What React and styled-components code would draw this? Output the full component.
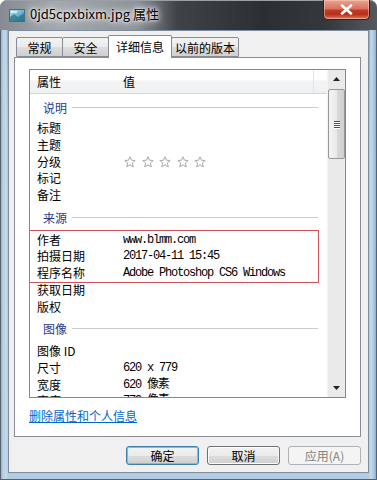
import React from 'react'
import styled, { createGlobalStyle } from 'styled-components'

const GlobalStyle = createGlobalStyle`
  html, body { margin: 0; padding: 0; background: #fff; }
  body {
    font-family: "Noto Sans CJK SC", "Noto Sans", sans-serif;
    font-size: 12px;
    color: #000;
  }
`

const groups = [
  {
    title: '说明',
    first: true,
    rows: [
      { label: '标题' },
      { label: '主题' },
      { label: '分级', stars: true },
      { label: '标记' },
      { label: '备注' },
    ],
  },
  {
    title: '来源',
    marked: [
      { label: '作者', value: 'www.blmm.com' },
      { label: '拍摄日期', value: '2017-04-11 15:45' },
      { label: '程序名称', value: 'Adobe Photoshop CS6 Windows' },
    ],
    rows: [{ label: '获取日期' }, { label: '版权' }],
  },
  {
    title: '图像',
    rows: [
      { label: '图像 ID' },
      { label: '尺寸', value: '620 x 779' },
      { label: '宽度', value: '620 像素' },
      { label: '高度', value: '779 像素' },
    ],
  },
]

function PictureIcon() {
  return (
    <svg width="16" height="13" viewBox="0 0 16 13">
      <defs>
        <linearGradient id="pic" x1="0" y1="0" x2="1" y2="1">
          <stop offset="0" stopColor="#bfe3f0" />
          <stop offset="0.5" stopColor="#6fb6cf" />
          <stop offset="1" stopColor="#2f7f9c" />
        </linearGradient>
      </defs>
      <rect x="0.5" y="0.5" width="15" height="12" fill="url(#pic)" stroke="#3b6f8a" />
      <path d="M1 8 L5 5 L9 8 L15 4 L15 12 L1 12 Z" fill="#2c6e86" opacity="0.7" />
      <path d="M2 3 L8 3" stroke="#eaf6fb" strokeWidth="1.5" />
    </svg>
  )
}

function Star() {
  return (
    <svg width="12" height="12" viewBox="0 0 12 12">
      <path
        d="M6 0.8 L7.5 4.2 L11.2 4.5 L8.4 7 L9.3 10.9 L6 8.9 L2.7 10.9 L3.6 7 L0.8 4.5 L4.5 4.2 Z"
        fill="#fbfbfb"
        stroke="#a9a9a9"
        strokeWidth="1"
        strokeLinejoin="round"
      />
    </svg>
  )
}

function PropRow({ label, value, stars }) {
  return (
    <Row>
      <Label>{label}</Label>
      {stars ? (
        <Stars>
          {[0, 1, 2, 3, 4].map((i) => (
            <Star key={i} />
          ))}
        </Stars>
      ) : (
        <Value>{value}</Value>
      )}
    </Row>
  )
}

export default function App() {
  return (
    <>
      <GlobalStyle />
      <Window>
        <TitleBar>
          <TitleIcon>
            <PictureIcon />
          </TitleIcon>
          <Title>0jd5cpxbixm.jpg 属性</Title>
          <CloseButton>
            <svg width="13" height="11" viewBox="0 0 13 11">
              <path d="M2 1.5 L11 9.5 M11 1.5 L2 9.5" stroke="#fff" strokeWidth="2.6" strokeLinecap="round" />
            </svg>
          </CloseButton>
        </TitleBar>

        <Client>
          <TabRow>
            <Tab $w={47}>常规</Tab>
            <Tab $w={47}>安全</Tab>
            <Tab $w={64} $active>详细信息</Tab>
            <Tab $w={68}>以前的版本</Tab>
          </TabRow>

          <Panel>
            <ListBox>
              <ListMain>
                <Header>
                  <HeadCell $w={86}>属性</HeadCell>
                  <HeadCell $w={191} $sep>值</HeadCell>
                </Header>
                <Body>
                  {groups.map((g) => (
                    <React.Fragment key={g.title}>
                      <GroupHead $first={g.first}>
                        <GroupTitle>{g.title}</GroupTitle>
                        <GroupLine />
                      </GroupHead>
                      {g.marked && (
                        <Marked>
                          {g.marked.map((r) => (
                            <PropRow key={r.label} {...r} />
                          ))}
                        </Marked>
                      )}
                      {g.rows.map((r) => (
                        <PropRow key={r.label} {...r} />
                      ))}
                    </React.Fragment>
                  ))}
                </Body>
              </ListMain>
              <ScrollBar>
                <ScrollArrow>
                  <svg width="7" height="4" viewBox="0 0 7 4"><path d="M0 4 L3.5 0 L7 4 Z" fill="#222" /></svg>
                </ScrollArrow>
                <Thumb>
                  <Grip />
                  <Grip />
                  <Grip />
                  <Grip />
                </Thumb>
                <Track />
                <ScrollArrow>
                  <svg width="7" height="4" viewBox="0 0 7 4"><path d="M0 0 L7 0 L3.5 4 Z" fill="#222" /></svg>
                </ScrollArrow>
              </ScrollBar>
            </ListBox>
            <RemoveLink href="#">删除属性和个人信息</RemoveLink>
          </Panel>

          <Buttons>
            <Button $focused>确定</Button>
            <Button>取消</Button>
            <Button disabled>应用(A)</Button>
          </Buttons>
        </Client>
      </Window>
    </>
  )
}

//#region Styling
const Window = styled.div`
  width: 377px;
  height: 480px;
  display: flex;
  flex-direction: column;
  border-radius: 7px 7px 0 0;
  overflow: hidden;
  box-sizing: border-box;
  background: linear-gradient(90deg, #8fa3b8 0, #b8cfe6 3px, #c6d9ec 6px, transparent 9px),
    linear-gradient(270deg, #8fa3b8 0, #a7c5e4 3px, #c6d9ec 6px, transparent 9px),
    linear-gradient(180deg, #5d6368 0, #7f878e 40px, #a9bccf 140px, #b3cbe3 100%);
  box-shadow: inset 0 0 0 1px #56636f;
`
const TitleBar = styled.div`
  height: 30px;
  flex: none;
  display: flex;
  align-items: flex-start;
  background: linear-gradient(90deg, #858b91 0%, #a3a9ae 15%, #8e949a 36%, #3f4348 47%, #2b2e32 70%, #34383c 86%, #55595d 100%);
  border-radius: 7px 7px 0 0;
  box-shadow: inset 0 1px 0 #9aa0a5;
`
const TitleIcon = styled.div`
  margin: 9px 0 0 9px;
  height: 13px;
  display: flex;
`
const Title = styled.div`
  margin-left: 5px;
  line-height: 28px;
  font-family: "Noto Sans CJK SC", "Noto Sans", sans-serif;
  font-size: 13px;
  color: #000;
  text-shadow: 0 0 6px #fff, 0 0 10px #e8ecef, 0 0 3px #fff;
  white-space: nowrap;
`
const CloseButton = styled.div`
  margin-left: auto;
  margin-right: 7px;
  width: 47px;
  height: 20px;
  box-sizing: border-box;
  display: flex;
  align-items: center;
  justify-content: center;
  border: 1px solid #4a1710;
  border-top: none;
  border-radius: 0 0 5px 5px;
  background: linear-gradient(180deg, #e9a594 0%, #d8735f 45%, #c23a22 55%, #b5301c 75%, #d87c63 100%);
  box-shadow: inset 0 0 0 1px rgba(255, 210, 200, 0.5);
`
const Client = styled.div`
  flex: 1;
  margin: 0 8px 8px 8px;
  box-sizing: border-box;
  background: #f0f0f0;
  border: 1px solid #7d8d9e;
  padding: 4px 7px 7px 5px;
  display: flex;
  flex-direction: column;
`
const TabRow = styled.div`
  height: 22px;
  display: flex;
  align-items: flex-end;
  padding-left: 2px;
  position: relative;
  z-index: 1;
`
const Tab = styled.div`
  box-sizing: border-box;
  width: ${(p) => p.$w}px;
  height: ${(p) => (p.$active ? 23 : 20)}px;
  margin: ${(p) => (p.$active ? '0 0 -1px 0' : '0')};
  display: flex;
  align-items: center;
  justify-content: center;
  border: 1px solid #898c95;
  border-bottom: ${(p) => (p.$active ? 'none' : '1px solid #898c95')};
  border-radius: 2px 2px 0 0;
  background: ${(p) =>
    p.$active ? '#fff' : 'linear-gradient(180deg, #f2f2f2 0%, #ebebeb 50%, #dddddd 51%, #cfcfcf 100%)'};
  font-size: 12px;
  line-height: 1;
  padding-top: ${(p) => (p.$active ? 0 : 1)}px;
  & + & { margin-left: -1px; }
`
const Panel = styled.div`
  height: 380px;
  box-sizing: border-box;
  background: #fff;
  border: 1px solid #898c95;
  padding: 11px 14px 0 14px;
  display: flex;
  flex-direction: column;
`
const ListBox = styled.div`
  height: 329px;
  box-sizing: border-box;
  border: 1px solid #828790;
  display: flex;
  overflow: hidden;
`
const ListMain = styled.div`
  flex: 1;
  display: flex;
  flex-direction: column;
  overflow: hidden;
`
const Header = styled.div`
  height: 24px;
  flex: none;
  box-sizing: border-box;
  display: flex;
  padding-left: 7px;
  border-bottom: 1px solid #d5d5d5;
  background: linear-gradient(180deg, #ffffff 0%, #ffffff 45%, #f3f4f6 46%, #f0f1f3 100%);
`
const HeadCell = styled.div`
  width: ${(p) => p.$w}px;
  display: flex;
  align-items: center;
  box-sizing: border-box;
  border-right: ${(p) => (p.$sep ? '1px solid #e3e5e8' : 'none')};
  font-size: 12px;
`
const Body = styled.div`
  flex: 1;
  overflow: hidden;
`
const GroupHead = styled.div`
  height: ${(p) => (p.$first ? 26 : 28)}px;
  display: flex;
  align-items: center;
  padding: 0 9px 0 13px;
`
const GroupTitle = styled.span`
  color: #1e3a8c;
  font-size: 12px;
`
const GroupLine = styled.div`
  flex: 1;
  height: 1px;
  margin-left: 5px;
  background: #c8ccd2;
`
const Marked = styled.div`
  margin-right: 9px;
  outline: 1px solid #d0505c;
`
const Row = styled.div`
  height: 16.7px;
  display: flex;
  align-items: center;
  padding-left: 7px;
`
const Label = styled.div`
  width: 86px;
  flex: none;
  font-size: 12px;
  line-height: 1;
  white-space: nowrap;
`
const Value = styled.div`
  font-family: "Liberation Mono", "Noto Sans CJK SC", monospace;
  font-size: 12px;
  letter-spacing: -1.2px;
  line-height: 1;
  white-space: pre;
`
const Stars = styled.div`
  display: flex;
  gap: 5.5px;
  margin-left: 1px;
`
const ScrollBar = styled.div`
  width: 17px;
  flex: none;
  display: flex;
  flex-direction: column;
  background: #eaeaea;
  border-left: 1px solid #f4f4f4;
`
const ScrollArrow = styled.div`
  height: 18px;
  flex: none;
  display: flex;
  align-items: center;
  justify-content: center;
`
const Thumb = styled.div`
  height: 70px;
  flex: none;
  box-sizing: border-box;
  margin: 1px 0;
  border: 1px solid #979797;
  border-radius: 2px;
  background: linear-gradient(90deg, #f4f4f4 0%, #e9e9e9 50%, #d9d9d9 51%, #cfcfcf 100%);
  display: flex;
  flex-direction: column;
  align-items: center;
  justify-content: center;
  gap: 1px;
`
const Grip = styled.div`
  width: 6px;
  height: 1px;
  background: #505050;
  box-shadow: 0 1px 0 #fff;
`
const Track = styled.div`
  flex: 1;
`
const RemoveLink = styled.a`
  margin-top: 9px;
  line-height: 17px;
  font-size: 12px;
  color: #0066cc;
  text-decoration: underline;
  align-self: flex-start;
`
const Buttons = styled.div`
  margin-top: 9px;
  display: flex;
  justify-content: flex-end;
  gap: 8px;
`
const Button = styled.button`
  width: 73px;
  height: 19px;
  padding: 0;
  box-sizing: border-box;
  font-family: "Noto Sans CJK SC", "Noto Sans", sans-serif;
  font-size: 12px;
  line-height: 1;
  color: #000;
  border-radius: 3px;
  border: 1px solid ${(p) => (p.$focused ? '#3c7fb1' : '#707070')};
  background: linear-gradient(180deg, #f2f2f2 0%, #ebebeb 50%, #dddddd 51%, #cfcfcf 100%);
  box-shadow: ${(p) => (p.$focused ? 'inset 0 0 0 1px #48d3fb' : 'inset 0 0 0 1px #fcfcfc')};
  &:disabled {
    color: #838383;
    border-color: #adb2b5;
    background: #f4f4f4;
    box-shadow: none;
  }
`
//#endregion
